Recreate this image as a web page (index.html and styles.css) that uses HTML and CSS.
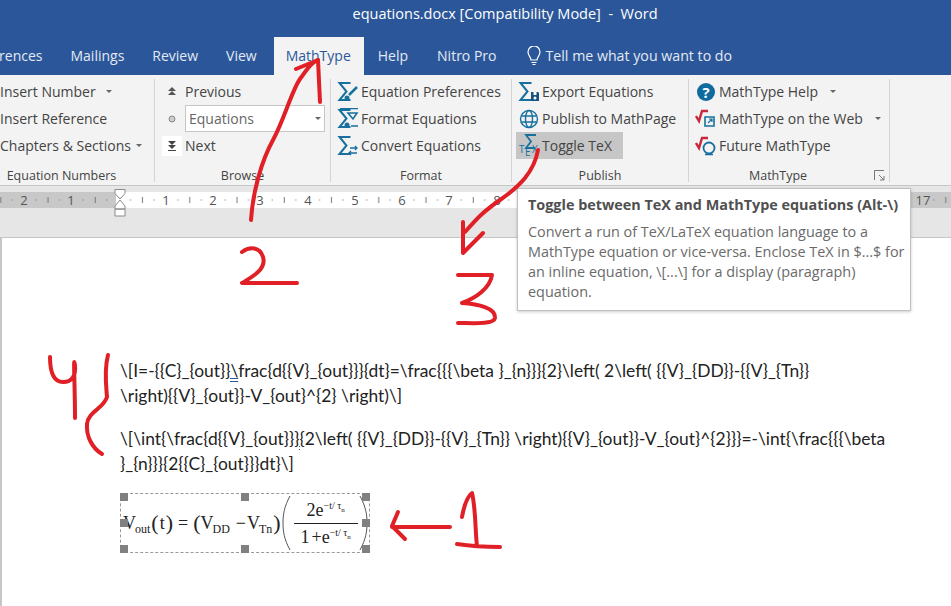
FILE: index.html
```html
<!DOCTYPE html>
<html>
<head>
    <title>equations.docx [Compatibility Mode] - Word</title>
    <link rel="stylesheet" href="styles.css">
</head>
<body>

    <svg class="defs" width="0" height="0">
        <symbol id="sigma" viewBox="0 0 22 22">
            <path d="M13.500 2H2.500l7 8.500-7 8.500h11" fill="none" stroke="#17709f" stroke-width="2"/>
        </symbol>
        <symbol id="root" viewBox="0 0 22 22">
            <path d="M1 8l3 5 3-10h6" fill="none" stroke="#c8283c" stroke-width="2.400"/>
        </symbol>
    </svg>

    <header class="titlebar">equations.docx [Compatibility Mode]&nbsp; -&nbsp; Word</header>

    <nav class="tabs">
        <span class="tab tab-first">References</span>
        <span class="tab">Mailings</span>
        <span class="tab">Review</span>
        <span class="tab">View</span>
        <span class="tab tab-active">MathType</span>
        <span class="tab">Help</span>
        <span class="tab tab-nitro">Nitro Pro</span>
        <span class="tell">
            <svg width="18" height="20" viewBox="0 0 18 20">
                <path d="M6 14c0-3-3-4-3-8a6 6 0 0 1 12 0c0 4-3 5-3 8zM6.500 16.500h5M7.500 18.500h3" fill="none" stroke="#fff" stroke-width="1.200"/>
            </svg>
            Tell me what you want to do
        </span>
    </nav>

    <section class="ribbon">
        <div class="group group-numbers">
            <div class="rows">
                <div class="row">Insert Number <i class="caret caret-far"></i></div>
                <div class="row">Insert Reference</div>
                <div class="row">Chapters &amp; Sections <i class="caret"></i></div>
            </div>
            <div class="group-label">Equation Numbers</div>
        </div>

        <div class="group group-browse">
            <div class="rows">
                <div class="row">
                    <svg class="icon-small" width="20" height="20" viewBox="0 0 20 20">
                        <path d="M10 5l4 4H6zM10 9l4 4H6z" fill="#555"/>
                    </svg>
                    Previous
                </div>
                <div class="row">
                    <svg class="icon-small" width="20" height="20" viewBox="0 0 20 20">
                        <circle cx="10" cy="10" r="3" fill="#ccc" stroke="#888"/>
                    </svg>
                    <div class="combo">Equations <i class="caret"></i></div>
                </div>
                <div class="row">
                    <svg class="icon-small icon-white" width="20" height="20" viewBox="0 0 20 20">
                        <path d="M6 5h8l-4 4zM6 9h8l-4 4zM6 14h8v1H6z" fill="#444"/>
                    </svg>
                    Next
                </div>
            </div>
            <div class="group-label">Browse</div>
        </div>

        <div class="group group-format">
            <div class="rows">
                <div class="row">
                    <svg class="icon" width="22" height="22" viewBox="0 0 22 22">
                        <use href="#sigma"/>
                        <path d="M20 6L12 14" stroke="#17709f" stroke-width="2.500"/>
                        <circle cx="10" cy="17" r="2.500" fill="#17709f"/>
                    </svg>
                    Equation Preferences
                </div>
                <div class="row">
                    <svg class="icon" width="22" height="22" viewBox="0 0 22 22">
                        <use href="#sigma"/>
                        <path d="M3 .5h18M11 5h9l-4 6zM14 18h7" fill="none" stroke="#17709f" stroke-width="1.600"/>
                        <circle cx="10" cy="17" r="2.500" fill="#17709f"/>
                    </svg>
                    Format Equations
                </div>
                <div class="row">
                    <svg class="icon" width="22" height="22" viewBox="0 0 22 22">
                        <use href="#sigma"/>
                        <path d="M13 13h7m-2-2l2 2-2 2M20 18h-8m2-2l-2 2 2 2" fill="none" stroke="#17709f" stroke-width="1.300"/>
                    </svg>
                    Convert Equations
                </div>
            </div>
            <div class="group-label">Format</div>
        </div>

        <div class="group group-publish">
            <div class="rows">
                <div class="row">
                    <svg class="icon" width="22" height="22" viewBox="0 0 22 22">
                        <use href="#sigma"/>
                        <path d="M13 11h7l1 1v8h-8z" fill="#17527f"/>
                        <path d="M15.500 11h3v3h-3z" fill="#fff"/>
                        <circle cx="17" cy="17" r="1.500" fill="#fff"/>
                    </svg>
                    Export Equations
                </div>
                <div class="row">
                    <svg class="icon" width="22" height="22" viewBox="0 0 22 22">
                        <g fill="none" stroke="#17709f" stroke-width="1.400">
                            <circle cx="11" cy="11" r="8.500"/>
                            <ellipse cx="11" cy="11" rx="3.500" ry="8.500"/>
                            <path d="M3.500 8h15M3.500 14h15"/>
                        </g>
                    </svg>
                    Publish to MathPage
                </div>
                <div class="row row-hover">
                    <svg class="icon icon-tex" width="22" height="22" viewBox="0 0 22 22">
                        <path d="M18 0H8l5 6.500L8 13h9" fill="none" stroke="#17709f" stroke-width="1.800"/>
                        <text class="tex-letters" x="1" y="18">T</text>
                        <text class="tex-letters" x="7" y="21">E</text>
                        <text class="tex-letters" x="14" y="18">X</text>
                    </svg>
                    Toggle TeX
                </div>
            </div>
            <div class="group-label">Publish</div>
        </div>

        <div class="group group-mathtype">
            <div class="rows">
                <div class="row">
                    <svg class="icon" width="22" height="22" viewBox="0 0 22 22">
                        <circle cx="11" cy="11" r="9" fill="#0f6a9e"/>
                        <text class="help-mark" x="11" y="16.500">?</text>
                    </svg>
                    MathType Help <i class="caret caret-help"></i>
                </div>
                <div class="row">
                    <svg class="icon" width="22" height="22" viewBox="0 0 22 22">
                        <use href="#root"/>
                        <path d="M10 9h9v9h-9z" fill="none" stroke="#17709f" stroke-width="1.600"/>
                        <path d="M13 15l4-4m-3 0h3v3" fill="none" stroke="#17709f" stroke-width="1.200"/>
                    </svg>
                    MathType on the Web <i class="caret caret-web"></i>
                </div>
                <div class="row">
                    <svg class="icon" width="22" height="22" viewBox="0 0 22 22">
                        <use href="#root"/>
                        <circle cx="14" cy="13" r="5.500" fill="none" stroke="#17709f" stroke-width="1.800"/>
                        <path d="M10 19.500h8" stroke="#17709f" stroke-width="1.500"/>
                    </svg>
                    Future MathType
                </div>
            </div>
            <div class="group-label">MathType</div>
            <svg class="launcher" width="11" height="11" viewBox="0 0 11 11">
                <path d="M.5 10V.5H10M5 5l5 5m0-4v4H6" fill="none" stroke="#777"/>
            </svg>
        </div>
    </section>

    <div class="ruler-band">
        <svg class="ruler" width="951" height="16" viewBox="0 0 951 16">
            <defs>
                <pattern id="ticks" x="118.500" y="0" width="47.250" height="16" patternUnits="userSpaceOnUse">
                    <rect x="11.500" y="7.500" width="1" height="1" fill="#666"/>
                    <rect x="23.500" y="5" width="1" height="6" fill="#777"/>
                    <rect x="35" y="7.500" width="1" height="1" fill="#666"/>
                </pattern>
            </defs>
            <rect x="116" width="790" height="16" fill="#fff"/>
            <rect width="116" height="16" fill="#c8c8c8"/>
            <rect x="906" width="45" height="16" fill="#c8c8c8"/>
            <rect width="951" height="16" fill="url(#ticks)"/>
            <g class="ruler-num">
                <text x="24" y="13">2</text>
                <text x="71" y="13">1</text>
                <text x="166" y="13">1</text>
                <text x="213" y="13">2</text>
                <text x="260" y="13">3</text>
                <text x="308" y="13">4</text>
                <text x="355" y="13">5</text>
                <text x="402" y="13">6</text>
                <text x="449" y="13">7</text>
                <text x="497" y="13">8</text>
                <text x="923" y="13">17</text>
            </g>
        </svg>
        <svg class="indent" width="12" height="28" viewBox="0 0 12 28">
            <path d="M1 .5h10v4L6 10 1 4.500zM6 11l5 6v3H1v-3zM1 20h10v7H1z" fill="#fff" stroke="#8a8a8a"/>
        </svg>
    </div>

    <main class="doc">
        <p class="tex">\[I=-{{C}_{out<span class="squiggle">}}\</span>frac{d{{V}_{out}}}{dt}=\frac{{{\beta }_{n}}}{2}\left( 2\left( {{V}_{DD}}-{{V}_{Tn}}<br>\right){{V}_{out}}-V_{out}^{2} \right)\]</p>
        <p class="tex">\[\int{\frac{d{{V}_{out<span class="squiggle">}}}{</span>2\left( {{V}_{DD}}-{{V}_{Tn}} \right){{V}_{out}}-V_{out}^{2}}}=-\int{\frac{{{\beta<br>}_{n}}}{2{{C}_{out}}}dt}\]</p>

        <div class="eq-box">
            <i class="handle h-tl"></i><i class="handle h-tc"></i><i class="handle h-tr"></i>
            <i class="handle h-ml"></i><i class="handle h-mr"></i>
            <i class="handle h-bl"></i><i class="handle h-bc"></i><i class="handle h-br"></i>

            <span>V<sub>out</sub></span>
            <span class="paren">(</span><span>t</span><span class="paren">)</span>
            <span class="op">=</span>
            <span class="paren">(</span>
            <span class="term">V<sub>DD</sub></span>
            <span class="op-minus">−</span>
            <span>V<sub>Tn</sub></span>
            <span class="paren">)</span>
            <svg class="big-paren" width="9" height="56" viewBox="0 0 9 56">
                <path d="M8 1C2 12 1 20 1 28s1 16 7 27" fill="none" stroke="#555"/>
            </svg>
            <div class="frac">
                <div class="num">2e<sup>−t/ τ<sub>n</sub></sup></div>
                <div class="den">1<span class="plus">+</span>e<sup>−t/ τ<sub>n</sub></sup></div>
            </div>
            <svg class="big-paren" width="9" height="56" viewBox="0 0 9 56">
                <path d="M1 1c6 11 7 19 7 27s-1 16-7 27" fill="none" stroke="#555"/>
            </svg>
        </div>
    </main>

    <aside class="tooltip">
        <h4>Toggle between TeX and MathType equations (Alt-\)</h4>
        <p>Convert a run of TeX/LaTeX equation language to a MathType equation or vice-versa. Enclose TeX in $...$ for an inline equation, \[...\] for a display (paragraph) equation.</p>
    </aside>

    <!-- hand drawn marks on top of the screenshot -->
    <svg class="marks" width="951" height="606" viewBox="0 0 951 606">
        <g fill="none" stroke="#e01f26" stroke-width="4" stroke-linecap="round" stroke-linejoin="round">
            <path d="M251 220C253 190 262 160 273 140S292 90 300 79 312 62 318 60L296 69"/>
            <path d="M318 60L320 102"/>
            <path d="M242 252C250 246 260 247 263 257 267 270 250 278 242 283H297"/>
            <path d="M538 150C534 172 520 186 500 200S476 220 465 232"/>
            <path d="M463 222V253L483 233"/>
            <path d="M458 275H492C490 288 476 298 462 303 478 304 496 308 495 318 494 325 470 323 458 323"/>
            <path d="M50 357C50 372 54 382 63 382S76 376 75 365C73 352 75 385 75 418"/>
            <path d="M108 355C104 370 106 385 107 397 104 408 88 412 87 424S92 448 102 454"/>
            <path d="M450 527H392M398 512L392 526 405 539"/>
            <path d="M462 517C464 506 468 496 472 493 476 510 475 530 477 546M457 544C470 546 488 547 500 547"/>
        </g>
    </svg>

</body>
</html>
```

FILE: styles.css
```css
* {
    box-sizing: border-box;
}

html, body {
    height: 100%;
}

body {
    margin: 0;
    overflow: hidden;
    position: relative;
    font-family: "Open Sans", sans-serif;
    font-size: 14px;
    color: #444;
    background-color: #fff;
}

.defs {
    position: absolute;
}

.titlebar {
    height: 37px;
    padding: 4px 0 0 59px;
    font-size: 14.500px;
    text-align: center;
    color: #fff;
    background-color: #2b579a;
}

.tabs {
    display: flex;
    height: 38px;
    color: #e3e9f3;
    background-color: #2b579a;
}

.tab {
    padding: 9px 14px 0;
}

.tab-first {
    margin-left: -44px;
}

.tab-active {
    padding: 9px 13px 0 12px;
    margin-left: 3px;
    color: #2b579a;
    background-color: #f3f3f3;
}

.tab-nitro {
    margin-left: 1px;
}

.tell {
    display: flex;
    align-items: flex-start;
    gap: 3px;
    margin-left: 14px;
    padding-top: 9px;
    font-size: 14.200px;
}

.ribbon {
    display: flex;
    height: 111px;
    padding-top: 4px;
    background-color: #f3f3f3;
    border-bottom: 1px solid #c6c6c6;
}

.group {
    position: relative;
    height: 103px;
    border-right: 1px solid #d4d4d4;
}

.group-numbers { width: 155px; padding-right: 31px; }
.group-browse { width: 176px; }
.group-format { width: 181px; }
.group-publish { width: 177px; }
.group-mathtype { width: 201px; padding-right: 22px; }

.rows {
    display: flex;
    flex-direction: column;
    height: 81px;
    margin-top: -1px;
}

.group-browse .rows { padding-left: 7px; }
.group-format .rows { padding-left: 4px; }
.group-publish .rows { padding-left: 4px; }
.group-mathtype .rows { padding-left: 4px; }

.row {
    display: flex;
    align-items: center;
    height: 27px;
    white-space: nowrap;
}

.row-hover {
    width: 107px;
    background-color: #c6c6c6;
}

.icon {
    margin: 0 2px;
    flex: none;
}

.icon-tex {
    overflow: visible;
}

.icon-small {
    margin-right: 3px;
    flex: none;
}

.icon-white {
    background-color: #fff;
}

.tex-letters {
    font-size: 10px;
    fill: #17709f;
}

.help-mark {
    font-size: 15px;
    font-weight: bold;
    fill: #fff;
    text-anchor: middle;
}

.caret {
    display: inline-block;
    margin-left: 5px;
    border-top: 3px solid #666;
    border-left: 3px solid transparent;
    border-right: 3px solid transparent;
}

.caret-far { margin-left: 10px; }
.caret-help { margin-left: 12px; }
.caret-web { margin-left: 12px; }

.combo {
    display: flex;
    align-items: center;
    justify-content: space-between;
    width: 140px;
    height: 27px;
    padding: 0 3px;
    color: #666;
    background-color: #fff;
    border: 1px solid #c6c6c6;
}

.group-label {
    margin-top: 8px;
    font-size: 12.500px;
    text-align: center;
}

.launcher {
    position: absolute;
    right: 4px;
    bottom: 1px;
}

.ruler-band {
    position: relative;
    height: 52px;
    padding-top: 6px;
    background-color: #e6e6e6;
    border-bottom: 1px solid #c6c6c6;
}

.ruler {
    display: block;
}

.ruler-num {
    font-size: 13px;
    fill: #555;
    text-anchor: middle;
}

.indent {
    position: absolute;
    left: 114px;
    top: 3px;
}

.doc {
    height: 368px;
    padding: 120px 0 0 120px;
    border-left: 2px solid #c6c6c6;
}

.tex {
    margin: 0 0 18px -2px;
    font-family: "Lato", sans-serif;
    font-size: 17.400px;
    line-height: 25px;
    color: #222;
    white-space: nowrap;
}

.squiggle {
    text-decoration: underline double #2b579a;
}

.eq-box {
    position: relative;
    display: flex;
    align-items: center;
    width: 250px;
    height: 60px;
    margin: -1px 0 0 -2px;
    padding-left: 2px;
    font-family: "Liberation Serif", serif;
    font-size: 18px;
    color: #222;
    white-space: nowrap;
    border: 1px dashed #999;
}

.eq-box sub {
    margin-left: -1px;
    font-size: 12px;
    line-height: 0;
}

.eq-box sup {
    font-size: 10px;
    line-height: 0;
}

.eq-box sup sub {
    margin-left: 0;
    font-size: 7px;
}

.paren {
    margin: 0 1px;
    font-size: 22px;
}

.op {
    margin: 0 4px;
}

.op-minus {
    margin: 0 1px 0 6px;
}

.term {
    margin-left: -1px;
}

.plus {
    margin-left: 2px;
}

.big-paren {
    flex: none;
}

.frac {
    display: flex;
    flex-direction: column;
    align-items: center;
    flex: none;
    width: 64px;
    line-height: 26px;
    margin: 0 1px 0 3px;
}

.num {
    width: 100%;
    text-align: center;
    border-bottom: 1px solid #222;
}

.handle {
    position: absolute;
    width: 8px;
    height: 8px;
    background-color: #808080;
}

.h-tl { left: -1px; top: -1px; }
.h-tc { left: 120px; top: -1px; }
.h-tr { right: -1px; top: -1px; }
.h-ml { left: -1px; top: 25px; }
.h-mr { right: -1px; top: 25px; }
.h-bl { left: -1px; bottom: -1px; }
.h-bc { left: 120px; bottom: -1px; }
.h-br { right: -1px; bottom: -1px; }

.tooltip {
    position: absolute;
    left: 517px;
    top: 188px;
    width: 394px;
    height: 123px;
    padding: 6px 5px 6px 10px;
    background-color: #fff;
    border: 1px solid #c0c0c0;
    box-shadow: 0 1px 3px rgba(0, 0, 0, 0.2);
}

.tooltip h4 {
    margin: 0 0 7px;
    font-size: 14.400px;
    line-height: 20px;
    white-space: nowrap;
    color: #505050;
}

.tooltip p {
    margin: 0;
    font-size: 14.400px;
    line-height: 20px;
    color: #6a6a6a;
}

.marks {
    position: absolute;
    left: 0;
    top: 0;
    pointer-events: none;
}
```
